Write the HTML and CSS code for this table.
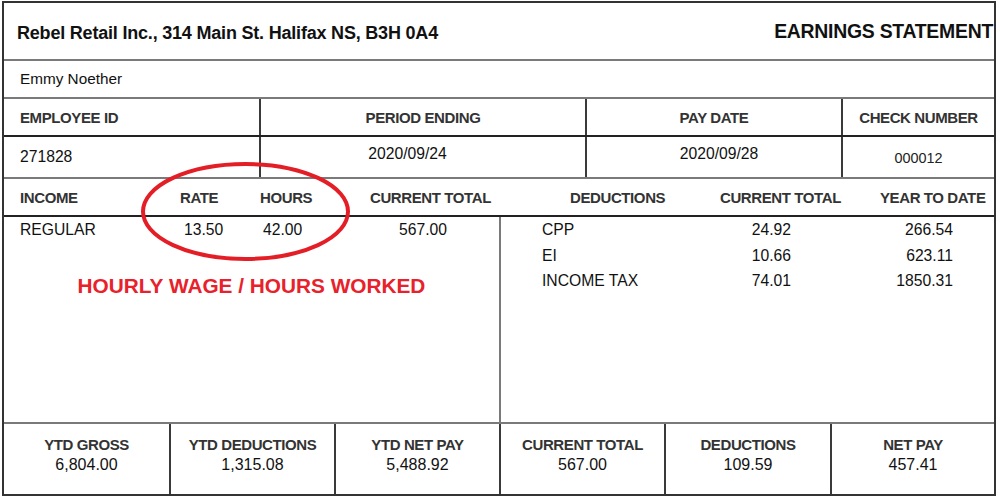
FILE: index.html
```html
<!DOCTYPE html>
<html lang="en">
<head>
<meta charset="utf-8">
<title>Earnings Statement</title>
<link rel="stylesheet" href="styles.css">
</head>
<body>
<div class="stub">
  <div class="head">
    <div class="company">Rebel Retail Inc., 314 Main St. Halifax NS, B3H 0A4</div>
    <div class="doc-title">EARNINGS STATEMENT</div>
  </div>
  <div class="name-row">Emmy Noether</div>
  <div class="info info-head">
    <div class="cell c1 left">EMPLOYEE ID</div>
    <div class="cell c2">PERIOD ENDING</div>
    <div class="cell c3">PAY DATE</div>
    <div class="cell c4">CHECK NUMBER</div>
  </div>
  <div class="info info-vals">
    <div class="cell c1 left">271828</div>
    <div class="cell c2 date-a">2020/09/24</div>
    <div class="cell c3 date-b">2020/09/28</div>
    <div class="cell c4 check">000012</div>
  </div>
  <div class="inc-head">
    <div class="h-income">INCOME</div>
    <div class="h-rate">RATE</div>
    <div class="h-hours">HOURS</div>
    <div class="h-cur">CURRENT TOTAL</div>
    <div class="h-ded">DEDUCTIONS</div>
    <div class="h-dcur">CURRENT TOTAL</div>
    <div class="h-ytd">YEAR TO DATE</div>
  </div>
  <div class="body">
    <div class="earn">
      <div class="earn-row">
        <div class="e-name">REGULAR</div>
        <div class="e-rate">13.50</div>
        <div class="e-hours">42.00</div>
        <div class="e-total">567.00</div>
      </div>
      <div class="note">HOURLY WAGE / HOURS WORKED</div>
    </div>
    <div class="deds">
      <div class="ded-row"><div class="d-name">CPP</div><div class="d-cur">24.92</div><div class="d-ytd">266.54</div></div>
      <div class="ded-row"><div class="d-name">EI</div><div class="d-cur">10.66</div><div class="d-ytd">623.11</div></div>
      <div class="ded-row"><div class="d-name">INCOME TAX</div><div class="d-cur">74.01</div><div class="d-ytd">1850.31</div></div>
    </div>
  </div>
  <div class="summary">
    <div class="sum s1"><div class="s-label">YTD GROSS</div><div class="s-val">6,804.00</div></div>
    <div class="sum s2"><div class="s-label">YTD DEDUCTIONS</div><div class="s-val">1,315.08</div></div>
    <div class="sum s3"><div class="s-label">YTD NET PAY</div><div class="s-val">5,488.92</div></div>
    <div class="sum s4"><div class="s-label">CURRENT TOTAL</div><div class="s-val">567.00</div></div>
    <div class="sum s5"><div class="s-label">DEDUCTIONS</div><div class="s-val">109.59</div></div>
    <div class="sum s6"><div class="s-label">NET PAY</div><div class="s-val">457.41</div></div>
  </div>
  <svg class="circle" width="209" height="99" viewBox="0 0 209 99" aria-hidden="true">
    <ellipse cx="104.5" cy="49.5" rx="102.5" ry="47.5" fill="none" stroke="#e41e26" stroke-width="4"/>
  </svg>
</div>
</body>
</html>
```

FILE: styles.css
```css
* { box-sizing: border-box; }
html, body { margin: 0; padding: 0; background: #fff; }
body {
  font-family: "Liberation Sans", Arial, sans-serif;
  color: #111;
}
.stub {
  position: relative;
  margin: 1px 0 0 2px;
  width: 994px;
  height: 495px;
  border: 2px solid #333;
  display: flex;
  flex-direction: column;
}
.head {
  height: 58px;
  border-bottom: 2px solid #7a7a7a;
  display: flex;
  align-items: center;
  justify-content: space-between;
}
.company {
  padding: 4px 0 0 13px;
  font-size: 18px;
  letter-spacing: -0.2px;
  font-weight: bold;
  color: #111;
}
.doc-title {
  padding-right: 1px;
  font-size: 19.4px;
  letter-spacing: -0.25px;
  font-weight: bold;
  color: #111;
}
.name-row {
  height: 38px;
  border-bottom: 2px solid #7a7a7a;
  display: flex;
  align-items: center;
  padding-left: 16px;
  font-size: 15.3px;
}
.info {
  display: flex;
}
.info-head {
  height: 38px;
  border-bottom: 2px solid #222;
  font-size: 15px;
  letter-spacing: -0.4px;
  font-weight: bold;
  color: #333;
}
.info-vals {
  height: 42px;
  border-bottom: 2px solid #7a7a7a;
  font-size: 15.7px;
}
.cell {
  display: flex;
  align-items: center;
  justify-content: center;
  border-right: 2px solid #3a3a3a;
}
.cell.left { justify-content: flex-start; padding-left: 16px; }
.c1 { width: 257px; }
.c2 { width: 326px; }
.c3 { width: 256px; }
.c4 { flex: 1; border-right: none; }
.date-a { padding-right: 31px; padding-bottom: 6px; }
.date-b { padding-left: 10px; padding-bottom: 6px; }
.check { font-size: 14.4px; padding-top: 2px; color: #222; letter-spacing: 0; }

.inc-head {
  height: 38px;
  border-bottom: 2px solid #222;
  display: grid;
  grid-template-columns: 166px 85px 85px 161px 199px 160px 1fr;
  align-items: center;
  font-size: 15px;
  letter-spacing: -0.4px;
  font-weight: bold;
  color: #333;
}
.h-income { padding-left: 16px; }
.h-rate { padding-left: 10px; }
.h-hours { padding-left: 5px; }
.h-cur { padding-left: 30px; }
.h-ded { padding-left: 69px; }
.h-dcur { padding-left: 20px; }
.h-ytd { padding-left: 20px; }

.body {
  height: 207px;
  border-bottom: 2px solid #7a7a7a;
  display: grid;
  grid-template-columns: 497px 1fr;
  font-size: 15.7px;
}
.earn {
  border-right: 2px solid #7a7a7a;
}
.earn-row {
  display: grid;
  grid-template-columns: 166px 85px 85px 1fr;
  line-height: 25.5px;
}
.e-name { padding-left: 16px; }
.e-rate { padding-left: 14px; }
.e-hours { padding-left: 8px; }
.e-total { padding-left: 59px; }
.note {
  margin-top: 31px;
  line-height: 24px;
  text-align: center;
  font-size: 20.8px;
  font-weight: bold;
  color: #e8212b;
}
.ded-row {
  display: grid;
  grid-template-columns: 199px 160px 1fr;
  line-height: 25.5px;
}
.d-name { padding-left: 41px; }
.d-cur { text-align: right; padding-right: 69px; }
.d-ytd { text-align: right; padding-right: 41px; }

.summary {
  flex: 1;
  display: flex;
}
.sum {
  border-right: 2px solid #3a3a3a;
  padding-top: 10.5px;
  text-align: center;
}
.s1 { width: 167px; }
.s2 { width: 165px; }
.s3 { width: 165px; }
.s4 { width: 165px; }
.s5 { width: 166px; }
.s6 { flex: 1; border-right: none; }
.s-label {
  line-height: 20px;
  font-size: 15px;
  letter-spacing: -0.4px;
  font-weight: bold;
  color: #333;
}
.s-val {
  line-height: 20px;
  font-size: 16px;
  color: #111;
}
.circle {
  position: absolute;
  left: 137px;
  top: 159px;
}
```
